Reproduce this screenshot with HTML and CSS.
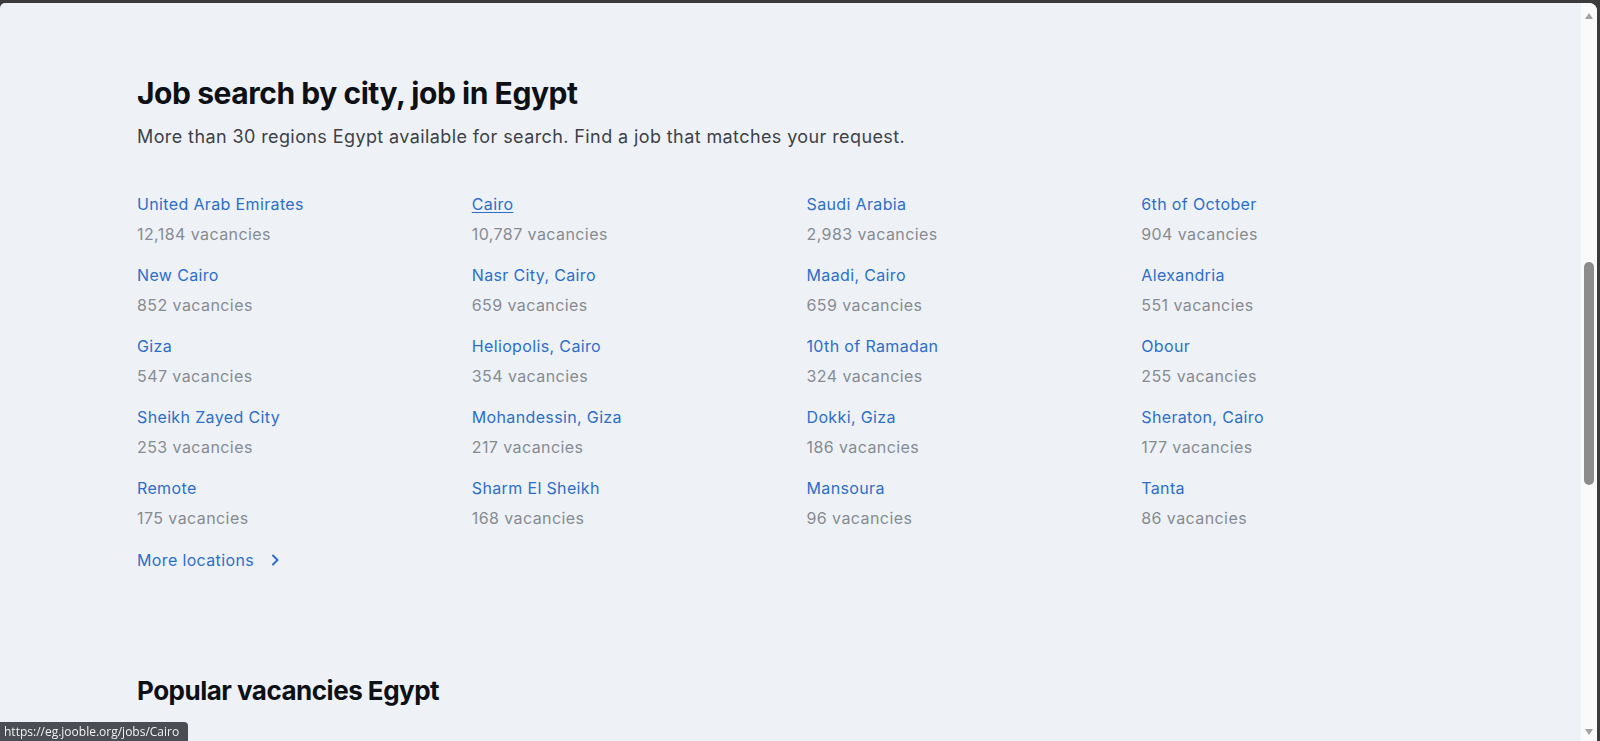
FILE: index.html
```html
<!DOCTYPE html>
<html lang="en">
<head>
<meta charset="utf-8">
<title>Job search by city, job in Egypt</title>
<link rel="stylesheet" href="styles.css">
</head>
<body>
<div class="window">
  <div class="page">
    <main class="content">
      <section class="regions">
        <h2 class="title">Job search by city, job in Egypt</h2>
        <p class="subtitle">More than 30 regions Egypt available for search. Find a job that matches your request.</p>
        <ul class="grid">
          <li class="item"><a class="link" href="#">United Arab Emirates</a><span class="count">12,184 vacancies</span></li>
          <li class="item"><a class="link hover" href="#">Cairo</a><span class="count">10,787 vacancies</span></li>
          <li class="item"><a class="link" href="#">Saudi Arabia</a><span class="count">2,983 vacancies</span></li>
          <li class="item"><a class="link" href="#">6th of October</a><span class="count">904 vacancies</span></li>
          <li class="item"><a class="link" href="#">New Cairo</a><span class="count">852 vacancies</span></li>
          <li class="item"><a class="link" href="#">Nasr City, Cairo</a><span class="count">659 vacancies</span></li>
          <li class="item"><a class="link" href="#">Maadi, Cairo</a><span class="count">659 vacancies</span></li>
          <li class="item"><a class="link" href="#">Alexandria</a><span class="count">551 vacancies</span></li>
          <li class="item"><a class="link" href="#">Giza</a><span class="count">547 vacancies</span></li>
          <li class="item"><a class="link" href="#">Heliopolis, Cairo</a><span class="count">354 vacancies</span></li>
          <li class="item"><a class="link" href="#">10th of Ramadan</a><span class="count">324 vacancies</span></li>
          <li class="item"><a class="link" href="#">Obour</a><span class="count">255 vacancies</span></li>
          <li class="item"><a class="link" href="#">Sheikh Zayed City</a><span class="count">253 vacancies</span></li>
          <li class="item"><a class="link" href="#">Mohandessin, Giza</a><span class="count">217 vacancies</span></li>
          <li class="item"><a class="link" href="#">Dokki, Giza</a><span class="count">186 vacancies</span></li>
          <li class="item"><a class="link" href="#">Sheraton, Cairo</a><span class="count">177 vacancies</span></li>
          <li class="item"><a class="link" href="#">Remote</a><span class="count">175 vacancies</span></li>
          <li class="item"><a class="link" href="#">Sharm El Sheikh</a><span class="count">168 vacancies</span></li>
          <li class="item"><a class="link" href="#">Mansoura</a><span class="count">96 vacancies</span></li>
          <li class="item"><a class="link" href="#">Tanta</a><span class="count">86 vacancies</span></li>
        </ul>
        <a class="more" href="#">More locations
          <svg class="chev" width="16" height="16" viewBox="0 0 16 16" aria-hidden="true"><path d="M6 3.5l4.5 4.5L6 12.5" fill="none" stroke="currentColor" stroke-width="2" stroke-linecap="round" stroke-linejoin="round"/></svg>
        </a>
      </section>
      <section class="popular">
        <h2 class="title small">Popular vacancies Egypt</h2>
      </section>
    </main>
    <div class="scrollbar">
      <span class="arrow up"></span>
      <span class="thumb"></span>
      <span class="arrow down"></span>
    </div>
  </div>
</div>
<div class="status">https://eg.jooble.org/jobs/Cairo</div>
</body>
</html>
```

FILE: styles.css
```css
* { box-sizing: border-box; }

html, body {
  margin: 0;
  height: 100%;
  overflow: hidden;
}

body {
  background: #3b3b3b;
  font-family: Inter, "Noto Sans", sans-serif;
}

.window {
  height: 741px;
  padding: 3px 3px 0 0;
  display: flex;
}

.page {
  flex: 1;
  display: flex;
  background: #eef2f7;
  border-radius: 5px 8px 0 0;
  overflow: hidden;
}

.content {
  flex: 1;
  padding: 72px 137px 0;
  overflow: hidden;
}

.title {
  margin: 0;
  font-size: 30px;
  line-height: 36px;
  font-weight: 700;
  color: #0d1015;
  letter-spacing: -0.45px;
}

.title.small {
  font-size: 26px;
  line-height: 36px;
  letter-spacing: -0.5px;
}

.subtitle {
  margin: 12px 0 0;
  font-size: 18px;
  line-height: 28px;
  color: #3d4148;
  letter-spacing: 0.4px;
}

.grid {
  list-style: none;
  margin: 41px 0 0;
  padding: 0;
  display: grid;
  grid-template-columns: repeat(4, 1fr);
  column-gap: 32px;
  row-gap: 17px;
}

.item {
  display: flex;
  flex-direction: column;
  align-items: flex-start;
  gap: 6px;
}

.link {
  font-size: 16px;
  line-height: 24px;
  color: #2c6ecb;
  text-decoration: none;
  letter-spacing: 0.36px;
}

.link.hover {
  text-decoration: underline;
  text-underline-offset: 2px;
}

.count {
  font-size: 16px;
  line-height: 24px;
  color: #878b92;
  letter-spacing: 0.42px;
}

.more {
  margin-top: 18px;
  display: inline-flex;
  align-items: center;
  gap: 13px;
  font-size: 16px;
  line-height: 24px;
  color: #2c6ecb;
  text-decoration: none;
  letter-spacing: 0.36px;
}

.chev {
  display: block;
}

.popular {
  margin-top: 101px;
}

.scrollbar {
  width: 16px;
  background: #fafafa;
  display: flex;
  flex-direction: column;
  align-items: center;
}

.arrow {
  width: 0;
  height: 0;
  border-left: 4px solid transparent;
  border-right: 4px solid transparent;
}

.arrow.up {
  margin-top: 10px;
  border-bottom: 6px solid #a3a3a3;
}

.arrow.down {
  margin-top: auto;
  margin-bottom: 6px;
  border-top: 6px solid #a3a3a3;
}

.thumb {
  margin-top: 243px;
  width: 10px;
  height: 223px;
  border-radius: 5px;
  background: #8c8c8c;
}

.status {
  position: fixed;
  left: 0;
  bottom: 0;
  height: 19px;
  padding: 0 9px 0 4px;
  background: #4a4e54;
  color: #f1f1f1;
  font-family: "Open Sans", "Liberation Sans", sans-serif;
  font-size: 12px;
  line-height: 19px;
  border-top-right-radius: 4px;
}
```
